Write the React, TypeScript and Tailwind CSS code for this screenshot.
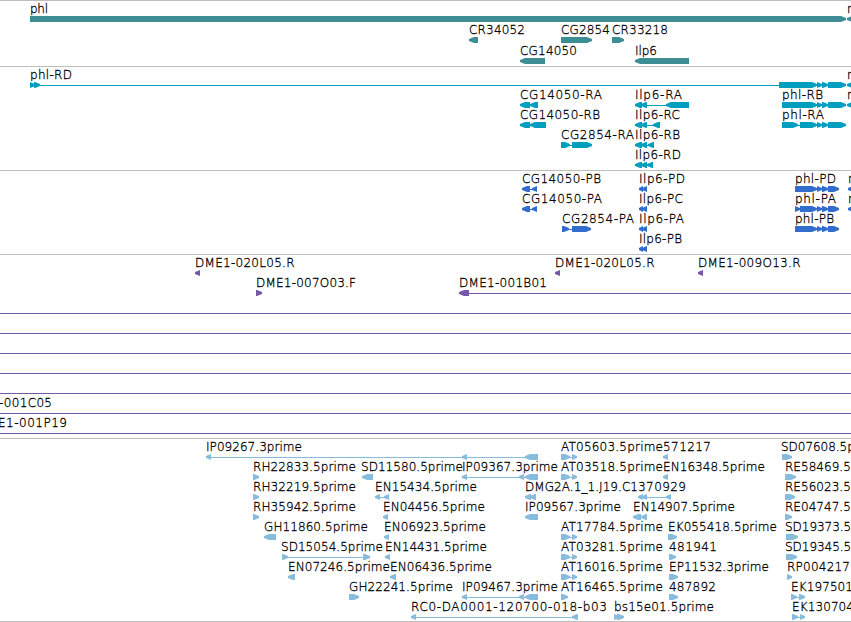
type Dir = 'l' | 'r';
type Block = [number, number, Dir];
type Feature = {
  name?: string;
  x?: number;
  end?: number;
  row: number;
  blocks?: Block[];
  lines?: [number, number][];
};
type TrackData = {
  id: string;
  color: string;
  height: string;
  px: number;
  base: number;
  pitch: number;
  features: Feature[];
};

const tail: Block[] = [[817, 822, 'r'], [822, 828, 'r']];

const genes: Feature[] = [
  { name: 'phl', x: 30, end: 48, row: 0, blocks: [[30, 846, 'r']] },
  { name: 'r', x: 847, row: 0, blocks: [[847, 856, 'l']] },
  { name: 'CR34052', x: 469, end: 525, row: 1, blocks: [[469, 478, 'l']] },
  { name: 'CG2854', x: 561, end: 610, row: 1, blocks: [[561, 592, 'r']] },
  { name: 'CR33218', x: 612, end: 668, row: 1, blocks: [[612, 624, 'r']] },
  { name: 'CG14050', x: 520, end: 577, row: 2, blocks: [[520, 545, 'l']] },
  { name: 'Ilp6', x: 635, end: 657, row: 2, blocks: [[635, 689, 'l']] },
];

const transcripts: Feature[] = [
  { name: 'phl-RD', x: 30, end: 72, row: 0, lines: [[36, 779]], blocks: [[30, 35, 'r'], [34, 40, 'r'], [779, 817, 'r'], ...tail, [828, 846, 'r']] },
  { name: 'r', x: 847, row: 0, blocks: [[847, 856, 'l']] },
  { name: 'CG14050-RA', x: 520, end: 602, row: 1, blocks: [[520, 530, 'l'], [530, 538, 'l']] },
  { name: 'Ilp6-RA', x: 635, end: 682, row: 1, lines: [[645, 670]], blocks: [[635, 642, 'l'], [641, 647, 'l'], [666, 689, 'l']] },
  { name: 'phl-RB', x: 782, end: 823, row: 1, blocks: [[782, 817, 'r'], ...tail, [828, 846, 'r']] },
  { name: 'r', x: 847, row: 1, blocks: [[847, 856, 'l']] },
  { name: 'CG14050-RB', x: 520, end: 600, row: 2, blocks: [[520, 530, 'l'], [530, 546, 'l']] },
  { name: 'Ilp6-RC', x: 635, end: 680, row: 2, lines: [[645, 655]], blocks: [[635, 642, 'l'], [641, 647, 'l'], [653, 660, 'l']] },
  { name: 'phl-RA', x: 782, end: 824, row: 2, lines: [[797, 801]], blocks: [[782, 798, 'r'], [800, 817, 'r'], ...tail, [828, 846, 'r']] },
  { name: 'CG2854-RA', x: 561, end: 634, row: 3, lines: [[566, 573]], blocks: [[561, 570, 'r'], [572, 592, 'r']] },
  { name: 'Ilp6-RB', x: 635, end: 680, row: 3, lines: [[645, 650]], blocks: [[635, 642, 'l'], [641, 647, 'l'], [648, 654, 'l']] },
  { name: 'Ilp6-RD', x: 635, end: 681, row: 4, blocks: [[635, 642, 'l'], [641, 647, 'l'], [647, 653, 'l']] },
];

const ilpP: Block[] = [[639, 643, 'l'], [642, 647, 'l']];
const proteins: Feature[] = [
  { name: 'CG14050-PB', x: 522, end: 601, row: 0, lines: [[529, 533]], blocks: [[522, 530, 'l'], [532, 537, 'l']] },
  { name: 'Ilp6-PD', x: 639, end: 685, row: 0, blocks: ilpP },
  { name: 'phl-PD', x: 795, end: 836, row: 0, blocks: [[795, 817, 'r'], ...tail, [828, 839, 'r']] },
  { name: 'r', x: 848, row: 0, blocks: [[848, 857, 'l']] },
  { name: 'CG14050-PA', x: 522, end: 602, row: 1, lines: [[529, 533]], blocks: [[522, 530, 'l'], [532, 537, 'l']] },
  { name: 'Ilp6-PC', x: 639, end: 683, row: 1, blocks: ilpP },
  { name: 'phl-PA', x: 795, end: 836, row: 1, blocks: [[795, 800, 'r'], [800, 817, 'r'], ...tail, [828, 839, 'r']] },
  { name: 'r', x: 848, row: 1, blocks: [[848, 857, 'l']] },
  { name: 'CG2854-PA', x: 562, end: 634, row: 2, lines: [[566, 573]], blocks: [[562, 569, 'r'], [572, 591, 'r']] },
  { name: 'Ilp6-PA', x: 639, end: 684, row: 2, blocks: ilpP },
  { name: 'phl-PB', x: 795, end: 834, row: 2, blocks: [[795, 817, 'r'], ...tail, [828, 839, 'r']] },
  { name: 'Ilp6-PB', x: 639, end: 682, row: 3, blocks: ilpP },
];

const clones: Feature[] = [
  { name: 'DME1-020L05.R', x: 195, end: 294.5, row: 0, blocks: [[195, 200, 'l']] },
  { name: 'DME1-020L05.R', x: 555, end: 654.5, row: 0, blocks: [[555, 560, 'l']] },
  { name: 'DME1-009O13.R', x: 698, end: 800.5, row: 0, blocks: [[698, 703, 'l']] },
  { name: 'DME1-007O03.F', x: 256, end: 356, row: 1, blocks: [[256, 262, 'r']] },
  { name: 'DME1-001B01', x: 459, end: 547, row: 1, lines: [[466, 851]], blocks: [[459, 469, 'l']] },
  { row: 2, lines: [[0, 851]] },
  { row: 3, lines: [[0, 851]] },
  { row: 4, lines: [[0, 851]] },
  { row: 5, lines: [[0, 851]] },
  { row: 6, lines: [[0, 851]] },
  { name: '-001C05', x: -1, end: 52, row: 7, lines: [[0, 851]] },
  { name: 'E1-001P19', x: -2, end: 67, row: 8, lines: [[0, 851]] },
];

const pair = (name: string, row: number): Feature => ({
  name, x: 561, end: 663, row, lines: [[567, 574]], blocks: [[561, 570, 'r'], [572, 577, 'r']],
});
const ests: Feature[] = [
  { name: 'IP09267.3prime', x: 206, end: 302, row: 0, lines: [[209, 528]], blocks: [[206, 211, 'l'], [462, 467, 'l'], [525, 538, 'l']] },
  pair('AT05603.5prime', 0),
  { name: '571217', x: 663, end: 711, row: 0, blocks: [[663, 668, 'l']] },
  { name: 'SD07608.5prime', x: 781, end: 882, row: 0, blocks: [[782, 792, 'r']] },
  { name: 'RH22833.5prime', x: 253, end: 356, row: 1, blocks: [[253, 259, 'r']] },
  { name: 'SD11580.5prime', x: 361, end: 463, row: 1, blocks: [[362, 373, 'l']] },
  { name: 'IP09367.3prime', x: 462, end: 558, row: 1, lines: [[465, 528]], blocks: [[462, 467, 'l'], [519, 524, 'l'], [525, 538, 'l']] },
  pair('AT03518.5prime', 1),
  { name: 'EN16348.5prime', x: 663, end: 765, row: 1, blocks: [[663, 668, 'l']] },
  { name: 'RE58469.5prime', x: 785, end: 886, row: 1, blocks: [[785, 796, 'r']] },
  { name: 'RH32219.5prime', x: 253, end: 356, row: 2, blocks: [[253, 259, 'r']] },
  { name: 'EN15434.5prime', x: 375, end: 477, row: 2, lines: [[378, 386]], blocks: [[375, 380, 'l'], [384, 389, 'l']] },
  { name: 'DMG2A.1_1.J19.C1', x: 525, end: 638, row: 2, blocks: [[525, 531, 'l'], [530, 536, 'l']] },
  { name: '370929', x: 638, end: 686, row: 2, lines: [[645, 669]], blocks: [[638, 643, 'l'], [642, 647, 'l'], [666, 671, 'l']] },
  { name: 'RE56023.5prime', x: 785, end: 886, row: 2, blocks: [[785, 795, 'r']] },
  { name: 'RH35942.5prime', x: 253, end: 356, row: 3, blocks: [[253, 259, 'r']] },
  { name: 'EN04456.5prime', x: 383, end: 485, row: 3, blocks: [[383, 388, 'l']] },
  { name: 'IP09567.3prime', x: 525, end: 621, row: 3, blocks: [[525, 538, 'l']] },
  { name: 'EN14907.5prime', x: 633, end: 735, row: 3, blocks: [[633, 641, 'l'], [641, 647, 'l']] },
  { name: 'RE04747.5prime', x: 785, end: 886, row: 3, blocks: [[785, 792, 'r']] },
  { name: 'GH11860.5prime', x: 264, end: 368, row: 4, blocks: [[264, 276, 'l']] },
  { name: 'EN06923.5prime', x: 384, end: 486, row: 4, blocks: [[384, 389, 'l']] },
  pair('AT17784.5prime', 4),
  { name: 'EK055418.5prime', x: 668, end: 777, row: 4, blocks: [[668, 677, 'r']] },
  { name: 'SD19373.5prime', x: 785, end: 886, row: 4, blocks: [[786, 798, 'r']] },
  { name: 'SD15054.5prime', x: 281, end: 383, row: 5, lines: [[285, 366]], blocks: [[282, 288, 'r'], [363, 370, 'r']] },
  { name: 'EN14431.5prime', x: 385, end: 487, row: 5, blocks: [[385, 390, 'l']] },
  pair('AT03281.5prime', 5),
  { name: '481941', x: 669, end: 717, row: 5, blocks: [[669, 676, 'r']] },
  { name: 'SD19345.5prime', x: 785, end: 886, row: 5, blocks: [[786, 797, 'r']] },
  { name: 'EN07246.5prime', x: 288, end: 390, row: 6, blocks: [[288, 295, 'l']] },
  { name: 'EN06436.5prime', x: 390, end: 492, row: 6, blocks: [[390, 396, 'l']] },
  pair('AT16016.5prime', 6),
  { name: 'EP11532.3prime', x: 669, end: 769, row: 6, blocks: [[669, 678, 'r']] },
  { name: 'RP004217', x: 787, end: 850, row: 6, blocks: [[787, 792, 'r']] },
  { name: 'GH22241.5prime', x: 349, end: 453, row: 7, blocks: [[349, 359, 'r']] },
  { name: 'IP09467.3prime', x: 462, end: 558, row: 7, lines: [[465, 528]], blocks: [[462, 467, 'l'], [519, 524, 'l'], [525, 538, 'l']] },
  { name: 'AT16465.5prime', x: 561, end: 663, row: 7, blocks: [[561, 568, 'r']] },
  { name: '487892', x: 669, end: 716, row: 7, blocks: [[669, 678, 'r']] },
  { name: 'EK197501', x: 791, end: 853, row: 7, lines: [[795, 801]], blocks: [[791, 797, 'r'], [799, 805, 'r']] },
  { name: 'RC0-DA0001-120700-018-b03', x: 411, end: 607, row: 8, lines: [[414, 575]], blocks: [[411, 416, 'l'], [572, 578, 'l']] },
  { name: 'bs15e01.5prime', x: 614, end: 714, row: 8, blocks: [[614, 619, 'r'], [617, 624, 'r']] },
  { name: 'EK130704', x: 792, end: 854, row: 8, lines: [[796, 802]], blocks: [[792, 798, 'r'], [800, 805, 'r']] },
];

const tracks: TrackData[] = [
  { id: 'genes', color: '#3d8e94', height: 'h-[66px]', px: 65, base: 12, pitch: 21, features: genes },
  { id: 'transcripts', color: '#009fbf', height: 'h-[104px]', px: 103, base: 12, pitch: 20, features: transcripts },
  { id: 'proteins', color: '#326dcd', height: 'h-[84px]', px: 83, base: 12, pitch: 20, features: proteins },
  { id: 'clones', color: '#7657a8', height: 'h-[184px]', px: 183, base: 12, pitch: 20, features: clones },
  { id: 'ests', color: '#87bcdd', height: 'h-[183px]', px: 182, base: 12, pitch: 20, features: ests },
];

function Arrow({ block: [a, b, dir], y }: { block: Block; y: number }) {
  const head = Math.min(5, b - a);
  const points =
    dir === 'r'
      ? `${a},${y} ${b - head},${y} ${b},${y + 2} ${b},${y + 4} ${b - head},${y + 6} ${a},${y + 6}`
      : `${b},${y} ${a + head},${y} ${a},${y + 2} ${a},${y + 4} ${a + head},${y + 6} ${b},${y + 6}`;
  return <polygon points={points} />;
}

function Track({ track }: { track: TrackData }) {
  return (
    <section className={`${track.height} w-full shrink-0 overflow-hidden border-t border-[#bebebe]`}>
      <svg width="851" height={track.px} className="block">
        {track.features.map((f, i) => {
          const y = track.base + f.row * track.pitch;
          return (
            <g key={i} fill={track.color}>
              {f.lines?.map(([a, b]) => (
                <rect key={a} x={a} y={y + 6} width={b - a} height={1} />
              ))}
              {f.blocks?.map((b) => <Arrow key={b[0]} block={b} y={y + 3} />)}
              {f.name && (
                <text x={f.x} y={y} fill="#000" stroke="#000" strokeWidth={0.3} textLength={f.end === undefined ? undefined : f.end - (f.x ?? 0)}>
                  {f.name}
                </text>
              )}
            </g>
          );
        })}
      </svg>
    </section>
  );
}

export default function App() {
  return (
    <main className="flex h-[622px] w-[851px] flex-col overflow-hidden bg-white font-['DejaVu_Sans',sans-serif] text-[12px] font-extralight">
      {tracks.map((t) => (
        <Track key={t.id} track={t} />
      ))}
      <div className="h-px w-full bg-[#bebebe]" />
    </main>
  );
}
